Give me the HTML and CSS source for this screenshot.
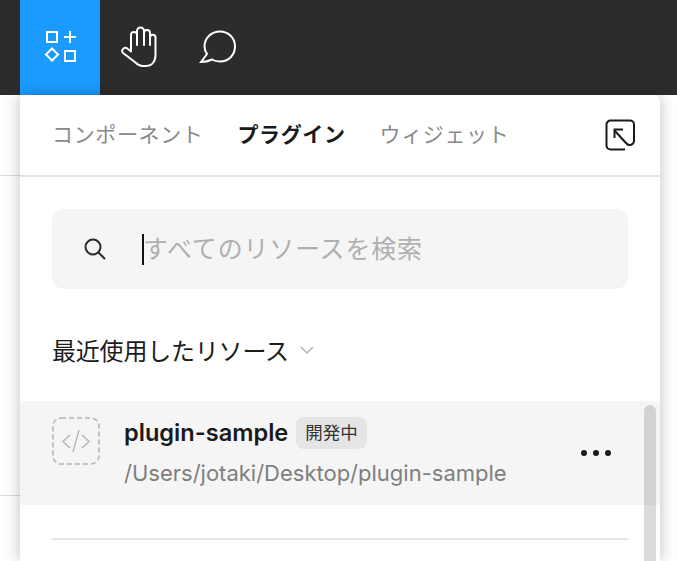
FILE: index.html
```html
<!DOCTYPE html>
<html lang="ja">
<head>
<meta charset="utf-8">
<title>Resources</title>
<link rel="stylesheet" href="styles.css">
</head>
<body>
<header class="toolbar">
  <button class="tool tool-active" aria-label="resources">
    <svg width="36" height="36" viewBox="0 0 36 36" fill="none" stroke="#fff" stroke-width="2">
      <rect x="5" y="3" width="10" height="10"/>
      <path d="M28 2V14M22 8H34"/>
      <path d="M10 19.500L16 25.500L10 31.500L4 25.500Z"/>
      <rect x="23" y="22" width="10" height="10"/>
    </svg>
  </button>
  <button class="tool tool-hand" aria-label="hand">
    <svg width="40" height="44" viewBox="0 0 40 44" fill="none" stroke="#fff" stroke-width="2" stroke-linecap="round" stroke-linejoin="round">
      <path d="M11 26V10a3 3 0 0 1 6 0V6a3.500 3.500 0 0 1 7 0V8a3 3 0 0 1 6 0V12.500a2.750 2.750 0 0 1 5.500 0V30c0 7-4 11-10 11h-3c-3 0-5-1.500-7-3.500L3 28c-1.500-1.500-1-3.500.5-4.500c1.500-1 3-1 4.500.5l3 2.500"/>
      <path d="M17 10V20M24 8V20M30 12V20"/>
    </svg>
  </button>
  <button class="tool tool-comment" aria-label="comment">
    <svg width="38" height="36" viewBox="0 0 38 36" fill="none" stroke="#fff" stroke-width="2">
      <path d="M2 33L8 25C6 22 5.500 20 5.500 17.500C5.500 9 12.500 2.500 21 2.500C29.500 2.500 36 9 36 17.500C36 26 29.500 32.500 21 32.500C18 32.500 15.500 32 13 30.500C10 32 6 33 2 33Z"/>
    </svg>
  </button>
</header>

<div class="canvas-line canvas-line-top"></div>
<div class="canvas-line canvas-line-bottom"></div>

<section class="panel">
  <nav class="tabs">
    <span class="tab">コンポーネント</span>
    <span class="tab tab-current">プラグイン</span>
    <span class="tab">ウィジェット</span>
    <svg class="popout" width="32" height="32" viewBox="0 0 32 32" fill="none" stroke="#1a1a1a" stroke-width="2">
      <path d="M21 30.500H6.500a4 4 0 0 1-4-4V5.500a4 4 0 0 1 4-4H26a4 4 0 0 1 4 4V22a4.300 4.300 0 0 1-7.500 2.500L10.500 11.500"/>
      <path d="M10.500 19V10.500H19"/>
    </svg>
  </nav>

  <div class="search">
    <svg class="search-icon" width="24" height="24" viewBox="0 0 24 24" fill="none" stroke="#2a2a2a" stroke-width="2">
      <circle cx="10" cy="10" r="7.500"/>
      <path d="M15.500 15.500L22 22"/>
    </svg>
    <span class="caret"></span>
    <span class="placeholder">すべてのリソースを検索</span>
  </div>

  <h2 class="section-title">最近使用したリソース
    <svg class="chevron" width="14" height="10" viewBox="0 0 14 10" fill="none" stroke="#b3b3b3" stroke-width="1.500">
      <path d="M1 2L7 8L13 2"/>
    </svg>
  </h2>

  <div class="row">
    <svg class="plugin-icon" width="48" height="48" viewBox="0 0 48 48" fill="none" stroke="#b3b3b3">
      <rect x="1" y="1" width="46" height="46" rx="8" stroke-width="1.500" stroke-dasharray="5 3"/>
      <path stroke-width="1.300" d="M18 18L11 24.500L18 31M30 18L37 24.500L30 31M27 13L21 35"/>
    </svg>
    <div class="row-text">
      <div class="row-head">
        <span class="row-name">plugin-sample</span>
        <span class="badge">開発中</span>
      </div>
      <div class="row-path">/Users/jotaki/Desktop/plugin-sample</div>
    </div>
    <div class="more"><i></i><i></i><i></i></div>
  </div>

  <div class="divider"></div>
  <div class="scrollbar"></div>
</section>
</body>
</html>
```

FILE: styles.css
```css
* { box-sizing: border-box; }

html, body {
  margin: 0;
  height: 561px;
  overflow: hidden;
  background: #fff;
  font-family: Inter, "Noto Sans CJK JP", sans-serif;
}

.toolbar {
  height: 95px;
  padding-left: 20px;
  display: flex;
  background: #2c2c2c;
}

.tool {
  border: 0;
  padding: 0;
  background: none;
  display: flex;
  align-items: center;
  justify-content: center;
}

.tool-active { width: 80px; background: #1b9bff; }
.tool-hand { width: 80px; }
.tool-comment { width: 76px; }
.tool svg { margin-bottom: 1px; }

.canvas-line {
  position: absolute;
  left: 0;
  width: 20px;
  height: 1px;
  background: #d9d9d9;
}
.canvas-line-top { top: 175px; }
.canvas-line-bottom { top: 495px; }

.panel {
  position: absolute;
  left: 20px;
  top: 95px;
  width: 640px;
  height: 466px;
  background: #fff;
  border-top-right-radius: 6px;
  box-shadow: 0 0 16px rgba(0, 0, 0, .26);
  overflow: hidden;
}

.tabs {
  height: 82px;
  padding: 0 16px 0 32px;
  display: flex;
  align-items: center;
  gap: 34px;
  border-bottom: 2px solid #e5e5e5;
}

.tab {
  font-size: 21px;
  line-height: 28px;
  color: #8a8a8a;
  white-space: nowrap;
  letter-spacing: .63px;
}

.tab-current {
  color: #1a1a1a;
  font-weight: 700;
}

.popout { margin-left: auto; margin-right: 8px; }

.search {
  position: relative;
  height: 80px;
  margin: 32px 32px 0;
  padding-left: 31px;
  display: flex;
  align-items: center;
  background: #f5f5f5;
  border-radius: 12px;
}

.search-icon { flex: none; }

.caret {
  width: 2px;
  height: 31px;
  margin-left: 35px;
  background: #111;
  flex: none;
}

.placeholder {
  margin-bottom: 4px;
  margin-left: -1px;
  font-size: 25px;
  letter-spacing: .8px;
  color: #b0b0b0;
  white-space: nowrap;
}

.section-title {
  margin: 43px 32px 0;
  height: 34px;
  display: flex;
  align-items: center;
  font-size: 24px;
  font-weight: 400;
  letter-spacing: -.2px;
  color: #1c1c1c;
  white-space: nowrap;
}

.chevron { margin-left: 11px; margin-top: 2px; }

.row {
  height: 104px;
  margin-top: 35px;
  padding: 0 49px 0 32px;
  display: flex;
  background: #f5f5f5;
}

.plugin-icon {
  margin-top: 16px;
  flex: none;
}

.row-text { margin-left: 24px; padding-top: 15px; }

.row-head {
  display: flex;
  align-items: center;
  gap: 8px;
  height: 32px;
}

.row-name {
  font-size: 23.600px;
  font-weight: 600;
  color: #1a1a1a;
}

.badge {
  height: 32px;
  margin-top: 2px;
  padding: 0 9px;
  line-height: 31px;
  font-size: 17.500px;
  color: #333;
  background: #e5e5e5;
  border-radius: 8px;
}

.row-path {
  margin-top: 10px;
  font-size: 22px;
  line-height: 30px;
  color: #7f7f7f;
  white-space: nowrap;
}

.more {
  margin-left: auto;
  margin-top: 49px;
  display: flex;
  gap: 6px;
  height: 6px;
}

.more i {
  width: 6px;
  height: 6px;
  border-radius: 50%;
  background: #1a1a1a;
}

.divider {
  height: 2px;
  margin: 33px 32px 0;
  background: #e5e5e5;
}

.scrollbar {
  position: absolute;
  left: 624px;
  top: 310px;
  width: 12px;
  height: 170px;
  border-radius: 6px;
  background: rgba(0, 0, 0, .14);
}
```
